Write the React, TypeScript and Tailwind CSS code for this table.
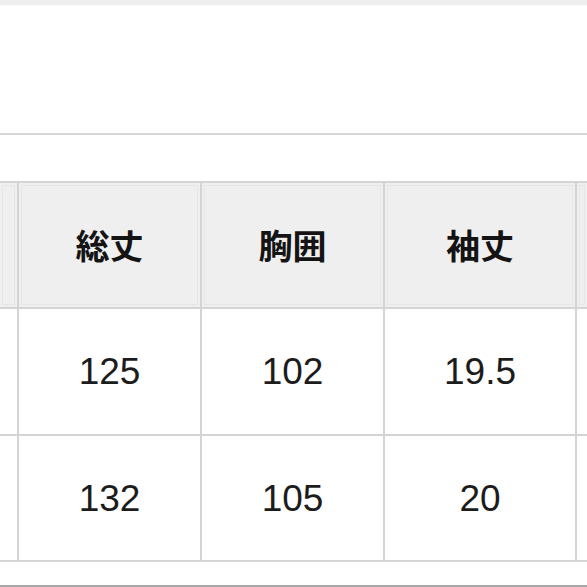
import React from "react";

const headers = ["総丈", "胸囲", "袖丈"];
const rows = [
  ["125", "102", "19.5"],
  ["132", "105", "20"],
];

function HeadCell({ children }: { children?: React.ReactNode }) {
  return (
    <div className="bg-[#efefef] p-[2px]">
      <div className="h-full w-full border border-[#e6e6e6] flex items-center justify-center">
        <span
          className="text-[34px] font-bold text-[#141414] leading-none"
          style={{ fontFamily: '"Noto Sans CJK JP", "Noto Sans", sans-serif' }}
        >
          {children}
        </span>
      </div>
    </div>
  );
}

function BodyCell({ children }: { children?: React.ReactNode }) {
  return (
    <div className="bg-white flex items-center justify-center">
      <span
        className="text-[37px] text-[#1c1c1c] leading-none"
        style={{ fontFamily: '"Liberation Sans", Arial, sans-serif' }}
      >
        {children}
      </span>
    </div>
  );
}

export default function App() {
  return (
    <div className="w-[587px] h-[587px] bg-white overflow-hidden flex flex-col">
      <div className="h-[5px] bg-[#eeeeee]" />
      <div className="h-[128px] bg-white" />
      <div className="h-[2px] bg-[#d6d6d6]" />
      <div className="h-[46px] bg-white" />
      <div className="grid grid-cols-[17px_181px_181px_190px_1fr] grid-rows-[124px_125px_124px] gap-[2px] bg-[#d4d4d4] py-[2px]">
        <HeadCell />
        {headers.map((h) => (
          <HeadCell key={h}>{h}</HeadCell>
        ))}
        <HeadCell />
        {rows.map((r, i) => (
          <React.Fragment key={i}>
            <BodyCell />
            {r.map((v, j) => (
              <BodyCell key={j}>{v}</BodyCell>
            ))}
            <BodyCell />
          </React.Fragment>
        ))}
      </div>
      <div className="flex-1 bg-white" />
      <div className="h-[2px] bg-[#a8a8a8]" />
    </div>
  );
}
